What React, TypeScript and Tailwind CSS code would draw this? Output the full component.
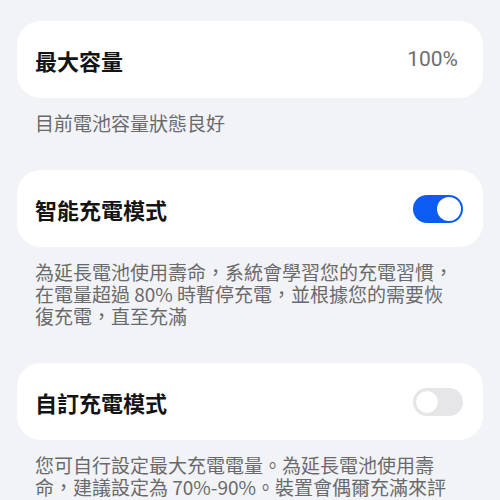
const font = { fontFamily: '"Noto Sans CJK TC", "Noto Sans", sans-serif' };

const Toggle = ({ on }: { on: boolean }) => {
  return on ? (
    <div className="w-[50px] h-[28px] rounded-full bg-[#0b5cf2] flex items-center justify-end px-[2px]">
      <div className="w-[24px] h-[24px] rounded-full bg-white" />
    </div>
  ) : (
    <div className="w-[50px] h-[28px] rounded-full bg-[#e6e6e8] flex items-center justify-start px-[2px]">
      <div className="w-[24px] h-[24px] rounded-full bg-white border border-[#e2e2e2]" />
    </div>
  );
};

const Card = ({ title, right }: { title: string; right: React.ReactNode }) => (
  <div className="mx-[17px] h-[77px] bg-white rounded-[24px] flex items-center justify-between pl-[18px] pr-[20px]">
    <span className="text-[22px] font-semibold text-[#141414] leading-none">{title}</span>
    {right}
  </div>
);

const Caption = ({ children }: { children: React.ReactNode }) => (
  <p className="px-[35px] pt-[14px] pb-[36px] text-[19px] leading-[22px] text-[#6a6a6c]">{children}</p>
);

export default function App() {
  return (
    <div className="w-[500px] h-[500px] overflow-hidden bg-[#f2f3f6] pt-[21px]" style={font}>
      <Card
        title="最大容量"
        right={
          <span
            className="text-[21px] font-normal text-[#6e6e6e] pr-[5px] leading-none"
            style={{ fontFamily: 'Roboto, "Noto Sans CJK TC", sans-serif' }}
          >
            100%
          </span>
        }
      />
      <Caption>目前電池容量狀態良好</Caption>

      <Card title="智能充電模式" right={<Toggle on />} />
      <Caption>
        為延長電池使用壽命，系統會學習您的充電習慣，<br />
        在電量超過 80% 時暫停充電，並根據您的需要恢<br />
        復充電，直至充滿
      </Caption>

      <Card title="自訂充電模式" right={<Toggle on={false} />} />
      <Caption>
        您可自行設定最大充電電量。為延長電池使用壽<br />
        命，建議設定為 70%-90%。裝置會偶爾充滿來評
      </Caption>
    </div>
  );
}
